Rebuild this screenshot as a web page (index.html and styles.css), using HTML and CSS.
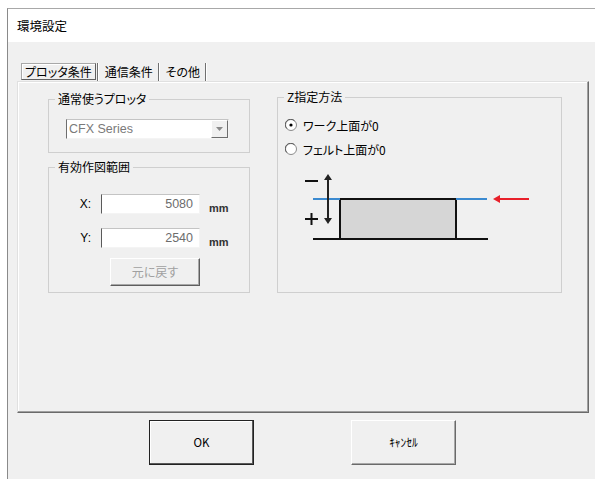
FILE: index.html
```html
<!DOCTYPE html>
<html lang="ja">
<head>
    <meta charset="UTF-8">
    <title>環境設定</title>
    <link rel="stylesheet" href="styles.css">
</head>
<body>
    <div class="window">
        <div class="titlebar">環境設定</div>
        <div class="client">
            <div class="tabs">
                <span class="tab-label active">プロッタ条件</span>
                <span class="tab-sep"></span>
                <span class="tab-label">通信条件</span>
                <span class="tab-sep"></span>
                <span class="tab-label">その他</span>
                <span class="tab-sep"></span>
            </div>
            <div class="panel">
                <div class="col-left">
                    <div class="group group-plotter">
                        <div class="group-title">通常使うプロッタ</div>
                        <div class="combo">
                            <span class="combo-text">CFX Series</span>
                            <span class="combo-btn">
                                <svg width="7" height="4" viewBox="0 0 7 4"><path d="M0 0h7L3.5 4z" fill="#8a8a8a"/></svg>
                            </span>
                        </div>
                    </div>
                    <div class="group group-area">
                        <div class="group-title">有効作図範囲</div>
                        <div class="field-row first">
                            <span class="field-label">X:</span>
                            <span class="field-input">5080</span>
                            <span class="unit">mm</span>
                        </div>
                        <div class="field-row">
                            <span class="field-label">Y:</span>
                            <span class="field-input">2540</span>
                            <span class="unit">mm</span>
                        </div>
                        <div class="reset">元に戻す</div>
                    </div>
                </div>
                <div class="group group-z">
                    <div class="group-title">Z指定方法</div>
                    <div class="radio-row first">
                        <svg class="radio" width="12" height="12" viewBox="0 0 12 12">
                            <circle cx="6" cy="6" r="5.5" fill="#fff" stroke="#8a8a8a"/>
                            <path d="M1.8 9.5A5 5 0 0 1 9.5 1.8" fill="none" stroke="#5a5a5a"/>
                            <circle cx="6" cy="6" r="1.6" fill="#000"/>
                        </svg>
                        <span>ワーク上面が0</span>
                    </div>
                    <div class="radio-row">
                        <svg class="radio" width="12" height="12" viewBox="0 0 12 12">
                            <circle cx="6" cy="6" r="5.5" fill="#fff" stroke="#8a8a8a"/>
                            <path d="M1.8 9.5A5 5 0 0 1 9.5 1.8" fill="none" stroke="#5a5a5a"/>
                        </svg>
                        <span>フェルト上面が0</span>
                    </div>
                    <svg class="diagram" width="240" height="72" viewBox="0 0 240 72">
                        <rect x="40" y="27" width="116" height="40" fill="#d6d6d6" stroke="#111" stroke-width="2"/>
                        <line x1="13" y1="27" x2="40" y2="27" stroke="#3b8ad0" stroke-width="2"/>
                        <line x1="156" y1="27" x2="187" y2="27" stroke="#3b8ad0" stroke-width="2"/>
                        <line x1="13" y1="67" x2="188" y2="67" stroke="#111" stroke-width="2"/>
                        <line x1="5" y1="9" x2="18" y2="9" stroke="#111" stroke-width="2"/>
                        <line x1="5" y1="47" x2="18" y2="47" stroke="#111" stroke-width="2"/>
                        <line x1="11.5" y1="41" x2="11.5" y2="53" stroke="#111" stroke-width="2"/>
                        <line x1="28" y1="4" x2="28" y2="50" stroke="#222" stroke-width="2"/>
                        <path d="M24 8l4-6 4 6z" fill="#222"/>
                        <path d="M24 46l4 6 4-6z" fill="#222"/>
                        <line x1="198" y1="27" x2="229" y2="27" stroke="#e8202a" stroke-width="2"/>
                        <path d="M200 23l-7 4 7 4z" fill="#e8202a"/>
                    </svg>
                </div>
            </div>
            <div class="buttons">
                <div class="btn btn-default">OK</div>
                <div class="btn">ｷｬﾝｾﾙ</div>
            </div>
        </div>
    </div>
</body>
</html>
```

FILE: styles.css
```css
* {
    box-sizing: border-box;
}

body {
    margin: 0;
    background: #fff;
    font-family: "Noto Sans CJK JP", sans-serif;
    font-size: 12px;
    color: #000;
    font-feature-settings: "palt";
}

.window {
    margin: 8px 0 0 7px;
    height: 471px;
    border-top: 1px solid #a8a8a8;
    border-left: 1px solid #8a8a8a;
    background: #f0f0f0;
}

.titlebar {
    height: 33px;
    line-height: 33px;
    padding-left: 9px;
    background: #fff;
    font-size: 12.5px;
}

.client {
    padding: 20px 6px 0 9px;
}

/* tab strip */
.tabs {
    display: flex;
    align-items: flex-start;
    height: 19px;
    padding: 1px 0 0 4px;
}

.tab-label {
    height: 17px;
    line-height: 15px;
    padding: 0 3px;
    border: 1px solid transparent;
    white-space: nowrap;
}

.tab-label.active {
    border-color: #a8a8a8 #606060 #606060 #a8a8a8;
    box-shadow: inset 1px 1px 0 #fff;
}

.tab-sep {
    width: 2px;
    height: 18px;
    margin: 0 2px 0 1px;
    background: linear-gradient(to right, #707070 50%, #fff 50%);
}

.panel {
    display: flex;
    gap: 27px;
    height: 332px;
    padding-left: 30px;
    border: 1px solid;
    border-color: #e0e0e0 #6a6a6a #6a6a6a #e0e0e0;
    box-shadow: inset -1px -1px 0 #a0a0a0, inset 1px 1px 0 #fff;
}

/* group boxes */
.group {
    border: 1px solid #cfcfcf;
}

.group-title {
    width: fit-content;
    height: 14px;
    line-height: 14px;
    margin: -8px 0 0 6px;
    padding: 0 3px;
    background: #f0f0f0;
    white-space: nowrap;
}

.col-left {
    width: 202px;
    margin-top: 17px;
    align-self: flex-start;
}

.group-plotter {
    height: 54px;
}

.combo {
    display: flex;
    width: 163px;
    height: 20px;
    margin: 13px 0 0 17px;
    background: #fff;
    border: 1px solid;
    border-color: #c4c4c4 #f4f4f4 #f4f4f4 #6e6e6e;
}

.combo-text {
    flex: 1;
    padding-left: 2px;
    line-height: 18px;
    font-family: "Liberation Sans", sans-serif;
    font-size: 12.5px;
    color: #7a7a7a;
}

.combo-btn {
    display: flex;
    align-items: center;
    justify-content: center;
    width: 17px;
    background: #f0f0f0;
    border: 1px solid;
    border-color: #fff #6e6e6e #6e6e6e #fff;
}

.group-area {
    height: 126px;
    margin-top: 14px;
}

.field-row {
    display: flex;
    height: 20px;
    margin-top: 14px;
}

.field-row.first {
    margin-top: 20px;
}

.field-label {
    width: 42px;
    margin-right: 10px;
    text-align: right;
    line-height: 20px;
    font-family: "Liberation Sans", sans-serif;
    font-size: 12px;
}

.field-input {
    width: 99px;
    padding-right: 6px;
    text-align: right;
    line-height: 18px;
    background: #fff;
    border: 1px solid;
    border-color: #c4c4c4 #f4f4f4 #f4f4f4 #5a5a5a;
    font-family: "Liberation Sans", sans-serif;
    font-size: 12.5px;
    color: #6d6d6d;
}

.unit {
    align-self: flex-end;
    margin-left: 9px;
    line-height: 12px;
    font-family: "Liberation Sans", sans-serif;
    font-size: 11px;
    font-weight: bold;
    color: #333;
}

.reset {
    width: 90px;
    height: 28px;
    margin: 10px 0 0 61px;
    line-height: 25px;
    text-align: center;
    color: #a0a0a0;
    border: 1px solid;
    border-color: #fff #5e5e5e #5e5e5e #fff;
    box-shadow: inset -1px -1px 0 #a8a8a8;
}

.group-z {
    width: 285px;
    height: 196px;
    margin-top: 15px;
}

.radio-row {
    display: flex;
    align-items: center;
    gap: 6px;
    height: 14px;
    margin: 10px 0 0 7px;
}

.radio-row.first {
    margin-top: 14px;
}

.diagram {
    display: block;
    margin: 16px 0 0 22px;
}

/* dialog buttons */
.buttons {
    display: flex;
    gap: 97px;
    margin: 7px 0 0 132px;
}

.btn {
    width: 105px;
    height: 45px;
    line-height: 42px;
    text-align: center;
    font-size: 11.5px;
    border: 1px solid;
    border-color: #fff #6a6a6a #6a6a6a #fff;
    box-shadow: inset -1px -1px 0 #a8a8a8;
}

.btn-default {
    border-color: #222;
    box-shadow: inset -1px -1px 0 #5a5a5a, inset 1px 1px 0 #fff;
}
```
